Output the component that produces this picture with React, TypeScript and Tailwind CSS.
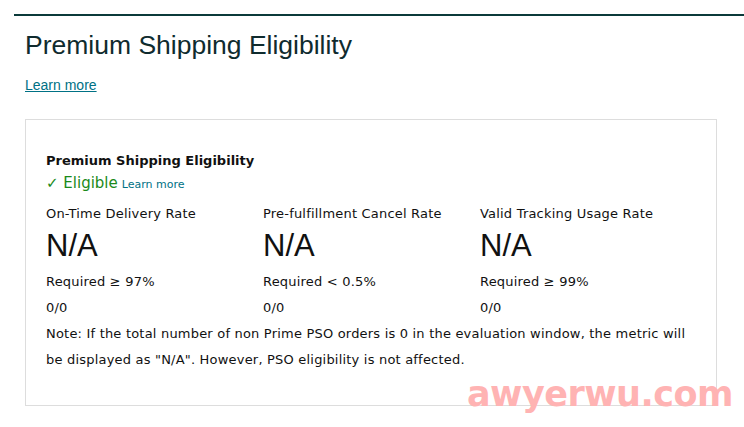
import React from "react";

const metrics = [
  { label: "On-Time Delivery Rate", req: "Required ≥ 97%" },
  { label: "Pre-fulfillment Cancel Rate", req: "Required < 0.5%" },
  { label: "Valid Tracking Usage Rate", req: "Required ≥ 99%" },
];

export default function App() {
  return (
    <div className="relative w-[744px] h-[427px] bg-white overflow-hidden">
      <div className="pt-[14px] pl-[14px]">
        <div className="h-[2px] bg-[#0b3a3a]" />
      </div>
      <div className="pl-[25px] pr-[27px]">
        <h1 className="mt-[13px] text-[26.5px] leading-[32px] text-[#0f2b2e] font-['Liberation_Sans',Arial,sans-serif]">
          Premium Shipping Eligibility
        </h1>
        <a className="block mt-[15px] text-[14px] leading-[18px] text-[#007185] underline font-['Liberation_Sans',Arial,sans-serif]">
          Learn more
        </a>
        <div className="mt-[25px] h-[287px] border border-[#dddddd] px-[20px] pt-[32px] font-['DejaVu_Sans',Verdana,sans-serif] text-[#111111]">
          <div className="text-[13px] leading-[18px] font-bold">Premium Shipping Eligibility</div>
          <div className="mt-[4px] flex items-baseline gap-[4px]">
            <span className="text-[15px] leading-[18px] text-[#1a8a1a]">✓ Eligible</span>
            <span className="text-[11px] text-[#007185]">Learn more</span>
          </div>
          <div className="mt-[12px] grid grid-cols-[217px_217px_217px]">
            {metrics.map((m) => (
              <div key={m.label} className="flex flex-col">
                <div className="text-[13px] leading-[16px] tracking-[0.2px]">{m.label}</div>
                <div className="mt-[6px] text-[31px] leading-[36px] font-['Liberation_Sans',Arial,sans-serif]">N/A</div>
                <div className="mt-[9px] text-[13px] leading-[18px] tracking-[0.2px]">{m.req}</div>
                <div className="mt-[8px] text-[13px] leading-[18px] tracking-[0.2px]">0/0</div>
              </div>
            ))}
          </div>
          <p className="mt-[4px] text-[13px] leading-[26px] tracking-[0.2px]">
            Note: If the total number of non Prime PSO orders is 0 in the evaluation window, the metric will be displayed as "N/A". However, PSO eligibility is not affected.
          </p>
        </div>
      </div>
      <div className="absolute left-[467px] top-[374px] text-[35px] leading-[40px] font-bold tracking-[-0.5px] text-[#ffb3b3] font-['DejaVu_Sans',sans-serif]">
        awyerwu.com
      </div>
    </div>
  );
}
